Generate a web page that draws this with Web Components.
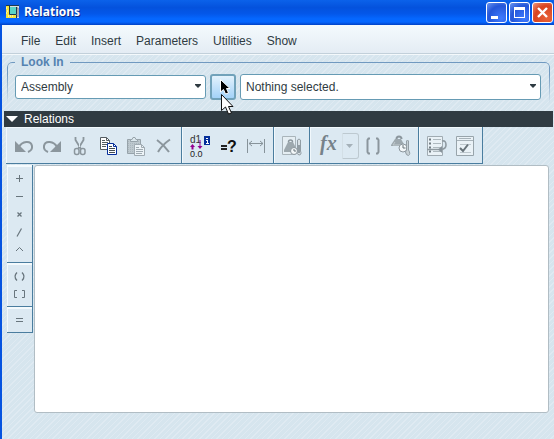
<!DOCTYPE html>
<html lang="en">
<head>
<meta charset="utf-8">
<title>Relations</title>
<style>
html,body{margin:0;height:100%}
body{font:12px/16px "Liberation Sans",Arial,sans-serif;color:#2f3b42}
</style>
</head>
<body>
<relations-window></relations-window>
<script>
const ICONS = {
undo:`<path d="M5 9V20H16z" fill="#8b969d"/><path d="M9 15C12 9 21 8 22 14C22.500 17 20.500 19 18 20" fill="none" stroke="#8b969d" stroke-width="2"/>`,
redo:`<path d="M23 9V20H12z" fill="#8b969d"/><path d="M19 15C16 9 7 8 6 14C5.500 17 7.500 19 10 20" fill="none" stroke="#8b969d" stroke-width="2"/>`,
cut:`<g fill="none" stroke="#8b969d"><path d="M9.500 5V8L15 17M17.500 5V8L12 17" stroke-width="1.800"/><path d="M13.500 12V15" stroke="#dde9f0"/><rect x="8.500" y="16.500" width="4.500" height="6" rx="2" stroke-width="1.500"/><rect x="14.500" y="16.500" width="4.500" height="6" rx="2" stroke-width="1.500"/></g>`,
copy:`<path d="M6.500 5.500H12.500L15.500 8.500V17.500H6.500z" fill="#fff" stroke="#555d62"/><path d="M12.500 5.500V8.500H15.500M8 8.500H11M8 10.500H14M8 12.500H14M8 14.500H12" fill="none" stroke="#555d62"/><path d="M13.500 11.500H19.500L22.500 14.500V22.500H13.500z" fill="#fff" stroke="#062f9a"/><path d="M19.500 11.500V14.500H22.500" fill="none" stroke="#062f9a"/><path d="M15 14.500H18M15 16.500H21M15 18.500H21M15 20.500H21" stroke="#454d52"/>`,
paste:`<path d="M5.500 7.500H18.500V21.500H5.500z" fill="#bdc8ce" stroke="#97a3aa"/><path d="M6 9.500H18M6 11.500H18M6 13.500H18M6 15.500H18M6 17.500H18M6 19.500H18" stroke="#aab6bd" stroke-dasharray="1 1"/><path d="M8.500 9.500V7.500H10L11 5.500H13L14 7.500H15.500V9.500z" fill="#dce8ee" stroke="#97a3aa"/><path d="M12.500 12.500H19.500L22.500 15.500V23.500H12.500z" fill="#edf4f8" stroke="#a0abb2"/><path d="M19.500 12.500V15.500H22.500M14 15.500H17M14 17.500H21M14 19.500H21M14 21.500H20" fill="none" stroke="#a0abb2"/>`,
remove:`<path d="M7 8Q14 13 19 20M20 7.500Q12 13 8 20" fill="none" stroke="#8b969d" stroke-width="2"/>`,
dims:`<text x="4" y="11" font-size="10" fill="#333">d1</text><rect x="18" y="4" width="6" height="9" fill="#062f9a"/><path d="M20 6H22V7H20zM20 8H22V11H23V12H20V11H21V9H20z" fill="#fff"/><path d="M6.500 12L9 15H7.500V17.500H5.500V15H4zM13.500 8H14.500V14H16.500L14 17L11.500 14H13.500z" fill="#96008f"/><text x="4" y="25" font-size="9" fill="#222">0.0</text>`,
verify:`<path d="M7 13H13V15H7zM7 16H13V18H7z" fill="#222"/><text x="13" y="20" font-size="16" font-weight="bold" fill="#111">?</text>`,
width:`<path d="M5.500 7V21M22.500 7V21M7 11.500H21M10 9L7 11.500L10 14M18 9L21 11.500L18 14" fill="none" stroke="#87939a"/>`,
units:`<path d="M4.500 4.500H17.500V22.500H4.500z" fill="#e5eef3" stroke="#a9b4ba"/><path d="M10.500 10A2 2 0 0 1 14.500 10" fill="none" stroke="#8b969d" stroke-width="1.500"/><path d="M10 10H15L19 18V20H6V18z" fill="#9da8ae"/><circle cx="16" cy="19" r="3.500" fill="#f3f7f9" stroke="#8b969d"/><path d="M16 17V19H18" fill="none" stroke="#69747a"/><path d="M19.500 19V8Q21 6 22.500 8V19Q24 23 21 23Q18 22 19.500 19z" fill="#d7e0e5" stroke="#929da4"/><path d="M21 13V21" stroke="#929da4" stroke-width="2"/>`,
fx:`<text x="6" y="18" class="math" font-size="20" fill="#76828a">fx</text>`,
brackets:`<path d="M11 6.500H9.500L8.500 8V20L9.500 21.500H11M17 6.500H18.500L19.500 8V20L18.500 21.500H17" fill="none" stroke="#8b969d" stroke-width="2"/>`,
scale:`<path d="M9.500 7A2.500 2.500 0 0 1 14.500 7" fill="none" stroke="#8b969d" stroke-width="2"/><path d="M8 7H14L18 14H4V13z" fill="#9da8ae"/><path d="M8 10L6 13H14" fill="none" stroke="#c0cace"/><circle cx="16" cy="16" r="4" fill="#f3f7f9" stroke="#8b969d"/><path d="M16 13V16H18.500" fill="none" stroke="#69747a"/><path d="M18.500 20L19.500 18V9Q20.500 7 21.500 9V18Q24 22 21.500 23.500Q19 23.500 18.500 20z" fill="#c6d0d5" stroke="#929da4"/>`,
sort:`<path d="M4.500 4.500H19.500V23.500H4.500z" fill="#eaf2f7" stroke="#a0abb2"/><path d="M6 7.500H8M6 11.500H8M6 15.500H8M6 19.500H8" stroke="#707b82" stroke-width="2"/><path d="M10 7.500H18M10 11.500H18M10 15.500H18M10 19.500H18" stroke="#aeb9bf"/><path d="M19 9Q23 8 23 13Q23 17 18 17.500M4 17.500H16" fill="none" stroke="#8f9aa1" stroke-width="1.600"/><path d="M19 14V21L15 17.500z" fill="#87929a"/>`,
check:`<path d="M5.500 4.500H22.500V23.500H5.500z" fill="#eaf2f7" stroke="#98a4ab"/><path d="M6 8.500H22M8 6.500H20" stroke="#a7b2b9"/><path d="M9 12.500H20M9 20.500H20" stroke="#bdc7cd"/><path d="M9 16L12 19L17 12.500" fill="none" stroke="#68737a" stroke-width="2"/>`,
plus:`<path d="M14.500 9V16M11 12.500H18" stroke="#68757d"/>`,
minus:`<path d="M11 12.500H18" stroke="#68757d"/>`,
times:`<path d="M12.500 10.500L16.500 14.500M16.500 10.500L12.500 14.500" stroke="#68757d" stroke-width="1.300"/>`,
divide:`<path d="M12 16.500L16.500 8.500" stroke="#68757d" stroke-width="1.200"/>`,
power:`<path d="M11 13L14.500 9.500L18 13" fill="none" stroke="#68757d"/>`,
parens:`<path d="M12 8.500Q8 12.500 12 16.500M17 8.500Q21 12.500 17 16.500" fill="none" stroke="#68757d" stroke-width="1.300"/>`,
index:`<path d="M12 8.500H9.500V15.500H12M17 8.500H19.500V15.500H17" fill="none" stroke="#68757d"/>`,
equals:`<path d="M11 10.500H18M11 13.500H18" stroke="#68757d"/>`
};
const define = (name, html, setup) => customElements.define(name, class extends HTMLElement {
  connectedCallback() {
    if (this.shadowRoot) return;
    const root = this.attachShadow({mode: "open"});
    root.innerHTML = html;
    if (setup) setup(this, root);
  }
});
const icon = (el, root) => {
  const svg = root.querySelector("svg");
  svg.innerHTML = ICONS[el.getAttribute("icon")];
  root.querySelector("button").setAttribute("aria-label", el.getAttribute("label"));
};

define("tool-button", `<style>
:host{display:block}
button{display:block;border:0;padding:0;background:none;width:28px;height:28px}
svg{display:block}
text{font-family:"Liberation Sans",sans-serif}
text.math{font-family:"Liberation Serif",serif;font-style:italic;font-weight:bold}
</style><button type="button"><svg width="28" height="28" aria-hidden="true"></svg></button>`, icon);

define("operator-button", `<style>
:host{display:block}
button{display:block;border:0;padding:0;background:none;width:100%;height:18px}
svg{display:block;margin:0 auto}
</style><button type="button"><svg width="19" height="18" viewBox="5 3 19 18" aria-hidden="true"></svg></button>`, icon);

define("tool-group", `<style>
:host{display:flex;align-items:center;box-sizing:border-box;height:37px;padding:1px 3px 0 4px;border:solid #4a7d9f;border-width:0 1px 1px 0;background:#dce9f2;box-shadow:inset 1px 1px #f1f8fc}
</style><slot></slot>`);

define("operator-group", `<style>
:host{display:block;padding:4px 0 3px;border:solid #4a7d9f;border-width:0 1px 1px 0;background:#dce9f2;box-shadow:inset 0 2px #f4fafd,inset 1px 0 #f1f8fc}
</style><slot></slot>`);

define("menu-arrow", `<style>
:host{display:block}
button{display:grid;place-items:center;box-sizing:border-box;width:17px;height:26px;padding:0 2px 0 0;border:1px solid #bdc9d0;border-left-color:#d3dfe6;border-radius:0 3px 3px 0;background:none}
</style><button type="button" aria-label="Function list"><svg width="7" height="4"><path d="M0 0H7L3.500 4z" fill="#a5b1b9"/></svg></button>`);

define("drop-down", `<style>
:host{display:grid;min-width:0}
select,svg{grid-area:1/1}
select{appearance:none;box-sizing:border-box;width:100%;height:var(--field-height,24px);margin:0;padding:0 20px 0 5px;border:1px solid #669bb4;border-radius:3px;background:#fff;font:inherit;color:#2f3b42;outline:0}
svg{place-self:center end;margin:0 5px 2px 0;pointer-events:none}
</style><select><option></option></select><svg width="6" height="4"><path d="M0 0H6V1L3 4L0 1z" fill="#2f3b42"/></svg>`, (el, root) => {
  root.querySelector("option").textContent = el.getAttribute("value");
  root.querySelector("select").setAttribute("aria-label", el.getAttribute("label"));
});

define("title-bar", `<style>
:host{display:flex;align-items:center;box-sizing:border-box;height:25px;padding:0 1px 1px 5px;background:linear-gradient(#0b62ea 0,#0452dd 30%,#0457e9 55%,#0567ff 75%,#0567ff 88%,#0141c5)}
h1{flex:1;margin:0 0 0 4px;font:bold 12px/16px "Open Sans","Noto Sans",sans-serif;color:#fff;text-shadow:1px 1px #0a2a86}
.controls{display:flex;gap:2px}
button{display:grid;place-items:center;box-sizing:border-box;width:21px;height:21px;padding:0;border:1px solid #fff;border-radius:3px;background:radial-gradient(circle at 75% 80%,#3f7bff,#2456d8 60%,#6c97f2)}
button.close{background:radial-gradient(circle at 75% 80%,#e8633a,#d84420 60%,#ef9a80)}
svg{display:block}
</style>
<svg width="15" height="14" aria-hidden="true"><path d="M1 1H14V13H1z" fill="#ddd"/><path d="M1 1H4V10H11V13H1z" fill="#f6e43c"/><path d="M1 3H3M2 6H4M1 8H3M3 11H9" stroke="#fff" stroke-dasharray="1 1"/><path d="M5 2H11V9H5z" fill="#59d4c7"/><path d="M1 .5H14M4.500 1V9.500H11.500V2M11.500 10V13" fill="none" stroke="#1c3950"/><path d="M12 3H13V12" fill="none" stroke="#777"/></svg>
<h1>Relations</h1>
<div class="controls">
<button type="button" aria-label="Minimize"><svg width="19" height="19"><path d="M4 13H11V16H4z" fill="#fff"/></svg></button>
<button type="button" aria-label="Maximize"><svg width="19" height="19"><path d="M4 4H15V15H4zM5 7V14H14V7z" fill="#fff" fill-rule="evenodd"/></svg></button>
<button type="button" class="close" aria-label="Close"><svg width="19" height="19"><path d="M5 5L14 14M14 5L5 14" stroke="#fff" stroke-width="2.400"/></svg></button>
</div>`);

define("menu-bar", `<style>
:host{display:block;border-bottom:1px solid #c2d0da;background:linear-gradient(#f4fafd,#e4ecf4)}
nav{display:flex;gap:15px;padding:8px 19px 4px}
button{border:0;padding:0;background:none;font:inherit;color:inherit}
</style><nav aria-label="Main menu"><button>File</button><button>Edit</button><button>Insert</button><button>Parameters</button><button>Utilities</button><button>Show</button></nav>`);

define("look-in", `<style>
:host{display:block;padding:0 4px 8px 5px;border-top:1px solid #f4f9fc}
fieldset{position:relative;min-width:0;margin:0;padding:5px 9px 3px 8px;border:0}
fieldset::before{content:"";position:absolute;inset:-7px 0 0;border:1px solid #7099c0;border-bottom:0;border-radius:5px 5px 0 0;mask:linear-gradient(#000 30%,transparent);pointer-events:none}
legend{position:relative;z-index:1;padding:0 6px;font-weight:bold;line-height:14px;color:#5583b1;background:#d8e6ef}
.row{position:relative;display:flex;align-items:center;gap:4px}
.scope{flex:0 1 191px}
.target{flex:1;--field-height:26px}
.pick button{display:grid;place-items:center;box-sizing:border-box;width:26px;height:26px;padding:0;border:2px solid #71a2ba;border-radius:3px;background:linear-gradient(#e3f2fc,#a3d2f8)}
svg{display:block}
</style>
<fieldset><legend>Look In</legend><div class="row">
<drop-down class="scope" value="Assembly" label="Look in"></drop-down>
<div class="pick"><button type="button" aria-label="Select item"><svg width="22" height="22"><path d="M8.500 3.500V16L11.500 13.500L13.500 18L16.500 17L14.500 12.500H18z" fill="#000" stroke="#fff"/></svg></button></div>
<drop-down class="target" value="Nothing selected." label="Selection"></drop-down>
</div></fieldset>`);

define("section-bar", `<style>
:host{display:block;margin:0 1px 0 2px;background:#303b42;color:#fff}
button{display:flex;align-items:center;gap:6px;width:100%;height:16px;padding:0 0 0 2px;border:0;background:none;font:inherit;color:inherit}
</style><button type="button" aria-expanded="true"><svg width="12" height="6" aria-hidden="true"><path d="M0 0H12L6 6z" fill="#fff"/></svg><span>Relations</span></button>`);

define("tool-bar", `<style>
:host{display:flex;padding-left:4px}
</style>
<tool-group><tool-button icon="undo" label="Undo"></tool-button><tool-button icon="redo" label="Redo"></tool-button><tool-button icon="cut" label="Cut"></tool-button><tool-button icon="copy" label="Copy"></tool-button><tool-button icon="paste" label="Paste"></tool-button><tool-button icon="remove" label="Delete"></tool-button></tool-group>
<tool-group><tool-button icon="dims" label="Switch dimensions"></tool-button><tool-button icon="verify" label="Evaluate"></tool-button><tool-button icon="width" label="Show dimension"></tool-button></tool-group>
<tool-group><tool-button icon="units" label="Units"></tool-button></tool-group>
<tool-group><tool-button icon="fx" label="Insert function"></tool-button><menu-arrow></menu-arrow><tool-button icon="brackets" label="Insert parameter"></tool-button><tool-button icon="scale" label="Insert unit"></tool-button></tool-group>
<tool-group><tool-button icon="sort" label="Sort relations"></tool-button><tool-button icon="check" label="Verify relations"></tool-button></tool-group>`);

define("relation-editor", `<style>
:host{display:flex;align-items:flex-start;gap:1px;flex:1;padding:1px 5px 26px 5px}
.operators{flex:0 0 26px}
textarea{flex:1;align-self:stretch;min-width:0;box-sizing:border-box;margin:0;padding:4px;border:1px solid #b1bdc4;border-radius:3px;background:#fff;resize:none;font:inherit;outline:0}
</style>
<div class="operators">
<operator-group><operator-button icon="plus" label="Plus"></operator-button><operator-button icon="minus" label="Minus"></operator-button><operator-button icon="times" label="Times"></operator-button><operator-button icon="divide" label="Divide"></operator-button><operator-button icon="power" label="Power"></operator-button></operator-group>
<operator-group><operator-button icon="parens" label="Parentheses"></operator-button><operator-button icon="index" label="Square brackets"></operator-button></operator-group>
<operator-group><operator-button icon="equals" label="Equals"></operator-button></operator-group>
</div>
<textarea aria-label="Relations"></textarea>`);

define("mouse-pointer", `<style>
:host{position:absolute;left:221px;top:94px;pointer-events:none}
svg{display:block}
</style><svg width="13" height="21" aria-hidden="true"><path d="M.5 .5V16.500L4.500 13L7.500 20L10.500 19L7.500 12.500H12z" fill="#fff" stroke="#111"/></svg>`);

define("relations-window", `<style>
:host{display:flex;flex-direction:column;min-height:100vh;position:relative}
main{flex:1;display:flex;flex-direction:column;border-left:2px solid #0553e0;background:repeating-linear-gradient(135deg,#dfeaf2 0 1px,#d6e5ee 1px 4px)}
</style><title-bar></title-bar><main><menu-bar></menu-bar><look-in></look-in><section-bar></section-bar><tool-bar></tool-bar><relation-editor></relation-editor></main><mouse-pointer></mouse-pointer>`);
</script>
</body>
</html>
